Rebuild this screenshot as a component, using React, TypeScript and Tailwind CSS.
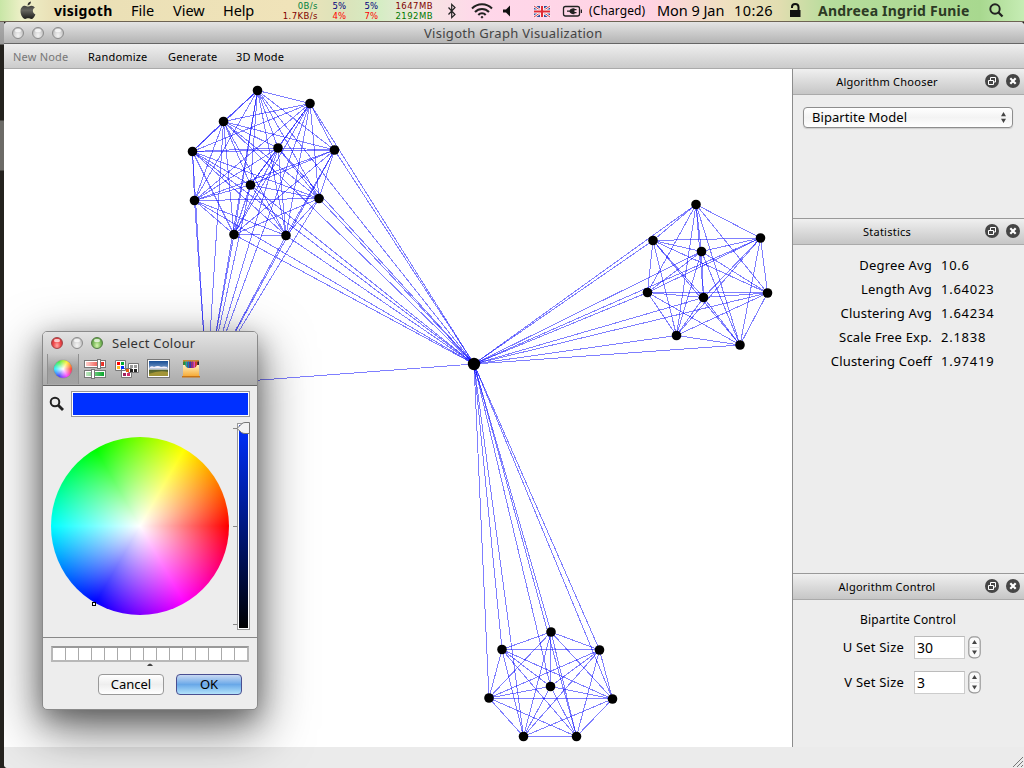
import React from "react";

type Pt = [number, number];

const clusterA: Pt[] = [[257.5, 90.5], [310, 103.5], [223.5, 121.5], [192.5, 151.5], [278, 148], [334.5, 150], [250.5, 185], [194.5, 200.5], [319, 198.5], [234, 234.5], [286, 235.5]];
const clusterB: Pt[] = [[696, 204.5], [653, 240.5], [760.5, 238], [701.5, 251.5], [647.5, 292.5], [703.5, 297.5], [767.5, 293], [676.5, 335.5], [740, 345]];
const clusterC: Pt[] = [[551, 632], [502, 649.5], [599.5, 650], [489, 698], [550.5, 686.5], [612.5, 699], [523.5, 736.5], [576.5, 736.5]];
const hub: Pt = [474, 364];
const hiddenHub: Pt = [207, 384];

const edges: [Pt, Pt][] = [];
for (const group of [clusterA, clusterB, clusterC]) {
  group.forEach((a, i) => {
    group.slice(i + 1).forEach((b) => edges.push([a, b]));
    edges.push([a, hub]);
    if (group === clusterA) edges.push([a, hiddenHub]);
  });
}
edges.push([hub, hiddenHub]);

function Graph() {
  return (
    <svg width="788" height="678" viewBox="4 69 788 678" className="block">
      <g stroke="#0000ff" strokeOpacity="0.5" strokeWidth="1" shapeRendering="crispEdges">
        {edges.map(([a, b], i) => (
          <line key={i} x1={a[0]} y1={a[1]} x2={b[0]} y2={b[1]} />
        ))}
      </g>
      {[...clusterA, ...clusterB, ...clusterC].map((p, i) => (
        <circle key={i} cx={p[0]} cy={p[1]} r="4.8" />
      ))}
      <circle cx={hub[0]} cy={hub[1]} r="6.2" />
    </svg>
  );
}

function Light({ kind }: { kind: "red" | "gray" | "green" }) {
  const c = {
    red: "border-[#a04548] bg-radial-[at_50%_75%] from-[#ffaaa5] via-[#f0494b] to-[#b82a30]",
    gray: "border-[#8c8c8c] bg-radial-[at_50%_75%] from-[#f4f4f4] via-[#d6d6d6] to-[#a8a8a8]",
    green: "border-[#527b43] bg-radial-[at_50%_75%] from-[#d5f6b0] via-[#82be60] to-[#4a8a38]",
  }[kind];
  return (
    <span className={`flex h-3 w-3 justify-center rounded-full border ${c}`}>
      <span className="mt-px h-[3px] w-1.5 rounded-full bg-white/70" />
    </span>
  );
}

function Apple() {
  return (
    <svg width="16" height="19" viewBox="0 0 16 19">
      <defs>
        <linearGradient id="apple" x1="0" y1="0" x2="0" y2="1">
          <stop offset="0" stopColor="#222" />
          <stop offset=".5" stopColor="#666660" />
          <stop offset="1" stopColor="#1c1c1a" />
        </linearGradient>
      </defs>
      <path fill="url(#apple)" d="M10.9.6C11.1 2.7 9.4 4.6 7.6 4.5 7.4 2.6 9 .9 10.9.6zM8 5.6C8.7 5.6 9.800 4.700 11.400 4.700 12.900 4.700 14.200 5.500 14.900 6.600 11.900 8.300 12.400 12.200 15.400 13.400 14.700 15.500 13 18 11.300 18 10.100 18 9.600 17.300 8.200 17.300 6.800 17.300 6.300 18 5.100 18 3.100 18 .5 14 .5 10.200.5 6.600 2.700 4.700 4.800 4.700 6.300 4.700 7.300 5.600 8 5.600z" />
    </svg>
  );
}

function Meter({ box, top, bottom, topColor, bottomColor }: { box: string; top: string; bottom: string; topColor: string; bottomColor: string }) {
  return (
    <div className={`flex shrink-0 flex-col items-end text-[8.5px] leading-[10px] [font-family:'DejaVu_Sans',sans-serif] ${box}`}>
      <span className={topColor}>{top}</span>
      <span className={bottomColor}>{bottom}</span>
    </div>
  );
}

function MenuBar() {
  return (
    <header className="flex h-[22px] shrink-0 items-center border-b border-[#6d6353] bg-[linear-gradient(90deg,#c8e6a6_0,#eef0c8_22px,#e9dfb5_55px,#f0e3b9_290px,#dbe3ba_345px,#d5edc4_380px,#f7e4e4_430px,#ffd7ea_480px,#ffd3e3_650px,#efe0c0_725px,#e1ddb0_780px,#b6dd9c_830px,#a8d88f_980px,#c6ecb4_1024px)] text-[14.5px] whitespace-nowrap text-black">
      <div className="w-[54px] shrink-0 pl-5"><Apple /></div>
      <b className="w-[77px] shrink-0 text-[14px] tracking-[0.3px]">visigoth</b>
      <span className="w-[42px] shrink-0">File</span>
      <span className="w-[50px] shrink-0">View</span>
      <span className="w-[50px] shrink-0 tracking-[-0.1px]">Help</span>
      <Meter box="w-[45px] tracking-[0.45px]" top="0B/s" bottom="1.7KB/s" topColor="text-[#00803c]" bottomColor="text-[#800000]" />
      <Meter box="w-[28px]" top="5%" bottom="4%" topColor="text-[#00007c]" bottomColor="text-[#f00]" />
      <Meter box="w-[32px]" top="5%" bottom="7%" topColor="text-[#00007c]" bottomColor="text-[#f00]" />
      <Meter box="w-[55px] tracking-[0.45px]" top="1647MB" bottom="2192MB" topColor="text-[#800000]" bottomColor="text-[#007a00]" />
      <svg className="ml-[14px] shrink-0" width="135" height="20" viewBox="447 1 135 20" fill="none" stroke="#222">
        <path d="M448.500 7.500l6.500 7-3.300 3.200V4.300l3.300 3.200-6.500 7" strokeWidth="1.200" />
        <g strokeWidth="2">
          <path d="M472 8.500a14 14 0 0 1 20 0M475 12a9.500 9.500 0 0 1 14 0M478.300 15a5 5 0 0 1 7.400 0" />
          <circle cx="482" cy="17.200" r=".8" fill="#222" strokeWidth="1" />
        </g>
        <path d="M503 9.500h3l4-4v11l-4-4h-3z" fill="#111" stroke="none" />
        <g stroke="none">
          <path fill="#31509a" d="M534 6h16v11h-16z" />
          <path d="M534 6l16 11M550 6l-16 11" stroke="#fff" strokeWidth="2.600" />
          <path d="M534 6l16 11M550 6l-16 11" stroke="#d8303c" strokeWidth="1" />
          <path d="M542 6v11M534 11.500h16" stroke="#fff" strokeWidth="4" />
          <path d="M542 6v11M534 11.500h16" stroke="#e02b35" strokeWidth="2.200" />
        </g>
        <rect x="563.500" y="6.500" width="16" height="9.500" rx="2" strokeWidth="1.300" />
        <path d="M581.400 9.500v3.500" strokeWidth="1.300" />
        <path d="M567 11.200h3M576.500 9.700h-3M576.500 12.700h-3" strokeWidth="1.300" />
        <path d="M574.500 8.300v5.900h-1.500q-3.500-.8-3.500-3t3.500-2.900z" fill="#222" stroke="none" />
      </svg>
      <span className="ml-[7px] w-[68px] shrink-0 text-[12px] tracking-[0.1px]">(Charged)</span>
      <span className="w-[77px] shrink-0 tracking-[-0.05px]">Mon 9 Jan</span>
      <span className="w-[56px] shrink-0 tracking-[0.4px]">10:26</span>
      <svg className="shrink-0" width="11" height="15" viewBox="0 0 11 15">
        <path d="M2 5V4Q2 1 5.200 1t3.300 3V8" fill="none" stroke="#111" strokeWidth="2" />
        <path d="M0 7h10.500v7H0z" fill="#111" />
      </svg>
      <b className="ml-[17px] w-[170px] shrink-0 text-[14px] font-bold tracking-[0.22px] text-[#2c3a24]">Andreea Ingrid Funie</b>
      <svg className="shrink-0" width="17" height="17" viewBox="0 0 17 17" fill="none" stroke="#222">
        <circle cx="7" cy="7" r="4.700" strokeWidth="1.900" />
        <path d="M10.500 10.500l4 4" strokeWidth="2.300" />
      </svg>
    </header>
  );
}

function DockTitle({ title }: { title: string }) {
  return (
    <div className="flex h-[26px] items-center border-b border-[#aaa] bg-linear-to-b from-[#f0f0f0] to-[#c6c6c6]">
      <div className="w-[188px] pt-[2px] text-center text-[11px] tracking-[0.24px]">{title}</div>
      <svg width="40" height="18" viewBox="0 0 40 18" className="-mt-0.5 ml-[2px]">
        <g fill="#454545"><circle cx="9" cy="9" r="7" /><circle cx="30" cy="9" r="7" /></g>
        <g fill="none" stroke="#fff" strokeWidth="1">
          <path d="M5.500 8.500h5v4h-5zM7.500 8V5.500h5v4.500H11" />
          <path d="M27.300 6.300l5.400 5.400M32.700 6.300l-5.400 5.400" strokeWidth="2.200" />
        </g>
      </svg>
    </div>
  );
}

function Stepper({ label, value }: { label: string; value: string }) {
  return (
    <div className="flex h-[35px] items-start">
      <span className="w-[111px] pt-[1px] text-right text-[13px] leading-[20px] tracking-[0.2px]">{label}</span>
      <span className="ml-[10px] h-[23px] w-[51px] border border-[#ccc] border-t-[#bbb] bg-white pl-[2px] text-[14px] leading-[22px]">{value}</span>
      <svg className="ml-[3px]" width="13" height="23" viewBox="0 0 13 23">
        <rect x=".8" y=".8" width="11.400" height="21" rx="4.500" fill="#fafafa" stroke="#999" strokeWidth="1.200" />
        <path d="M1.500 11.500h10" stroke="#e2e2e2" />
        <path d="M4 8l2.500-4L9 8zM4 14.500l2.500 4 2.500-4z" fill="#444" />
      </svg>
    </div>
  );
}

const stats: [string, string][] = [
  ["Degree Avg", "10.6"],
  ["Length Avg", "1.64023"],
  ["Clustering Avg", "1.64234"],
  ["Scale Free Exp.", "2.1838"],
  ["Clustering Coeff", "1.97419"],
];

function Sidebar() {
  return (
    <aside className="flex h-[678px] w-[232px] flex-col border-l border-[#8c8c8c] bg-[#ededed]">
      <section className="h-[149px]">
        <DockTitle title="Algorithm Chooser" />
        <div className="mt-[12px] ml-[10px] flex h-[21px] w-[210px] items-center justify-between rounded-[4px] border border-[#8d8d8d] bg-linear-to-b from-white via-[#f3f3f3] to-white pr-[5px] pl-[8px] text-[13px] shadow-[0_1px_1px_#ccc]">
          <span className="tracking-[0.06px]">Bipartite Model</span>
          <svg width="7" height="11" viewBox="0 0 7 11"><path d="M1 4.300L3.500 0 6 4.300zM1 6.700L3.500 11 6 6.700z" fill="#444" /></svg>
        </div>
      </section>
      <section className="h-[355px] border-t border-[#999]">
        <DockTitle title="Statistics" />
        <div className="pt-[8px] text-[13px] leading-[24px]">
          {stats.map(([k, v]) => (
            <div key={k} className="flex h-6">
              <span className="w-[139px] text-right tracking-[0.18px]">{k}</span>
              <span className="ml-[9px] tracking-[0.75px]">{v}</span>
            </div>
          ))}
        </div>
      </section>
      <section className="flex-1 border-t border-[#999]">
        <DockTitle title="Algorithm Control" />
        <div className="mt-[11px] h-[25px] w-[230px] text-center text-[12px] leading-[17px] tracking-[0.15px]">Bipartite Control</div>
        <Stepper label="U Set Size" value="30" />
        <Stepper label="V Set Size" value="3" />
      </section>
    </aside>
  );
}

function PickerTools() {
  return (
    <div className="flex h-[30px] items-center">
      <div className="ml-[4px] flex h-[30px] w-[32px] items-center justify-center border-x border-[#909090] bg-linear-to-b from-black/0 via-black/15 to-black/5">
        <span className="h-[18px] w-[18px] rounded-full bg-[radial-gradient(circle,#fff_0%,transparent_65%),conic-gradient(from_90deg,#f43,#f4f,#44f,#3ef,#4e4,#fe3,#f43)] shadow-[0_0_1px_#555]" />
      </div>
      <svg className="ml-[4px]" width="126" height="22" viewBox="0 0 126 22">
        <defs>
          <linearGradient id="r"><stop stopColor="#ffd0cc" /><stop offset="1" stopColor="#e8251c" /></linearGradient>
          <linearGradient id="g"><stop stopColor="#c4e8c4" /><stop offset="1" stopColor="#08a62b" /></linearGradient>
          <linearGradient id="sky" x1="0" y1="0" x2="0" y2="1">
            <stop stopColor="#174d96" /><stop offset=".35" stopColor="#5b83b8" /><stop offset=".55" stopColor="#e4e4ee" /><stop offset=".6" stopColor="#4f6130" /><stop offset="1" stopColor="#85832f" />
          </linearGradient>
          <linearGradient id="box" x1="0" y1="0" x2="0" y2="1"><stop stopColor="#fff0be" /><stop offset="1" stopColor="#f6a52c" /></linearGradient>
        </defs>
        <g strokeWidth="1" stroke="#777" fill="#fff">
          <rect x="1.500" y="2.500" width="21" height="7" /><rect x="1.500" y="12.500" width="21" height="7" />
          <path d="M3 4h18v4H3z" fill="url(#r)" stroke="none" /><path d="M3 14h18v4H3z" fill="url(#g)" stroke="none" />
          <rect x="14.500" y="1.500" width="3" height="9" /><rect x="8.500" y="11.500" width="3" height="9" />
          <path d="M45.500 5.500h10v9h-10zM38.500 10.500h10v9h-10zM32.500 2.500h10v10h-10z" />
        </g>
        <g>
          <path fill="#f00" d="M34 4h3v3h-3z" /><path fill="#0a3" d="M38 4h3v3h-3z" /><path fill="#fb2" d="M34 8h3v3h-3z" /><path fill="#03f" d="M38 8h3v3h-3z" />
          <path fill="#e85c10" d="M43 11h3v3h-3z" /><path fill="#a0215e" d="M40 15h3v3h-3z" /><path fill="#d32a6a" d="M44 15h3v3h-3z" />
          <path fill="#999" d="M47 7h3v3h-3zM51 7h3v3h-3z" /><path fill="#222" d="M47 11h3v3h-3zM51 11h3v3h-3z" />
        </g>
        <rect x="64.500" y="1.500" width="22" height="18" fill="#fff" stroke="#777" />
        <path d="M66 3h19v15H66z" fill="url(#sky)" />
        <path d="M67 9q2-1.500 4 0 4-2 7 0 3-1 6 0v1H67z" fill="#f5f0f8" />
        <path d="M66 16q10-4 19-2v4H66z" fill="#a39537" />
        <path d="M100 2h16v17h-16z" fill="#c88a35" />
        <path d="M100 4h16v7h-16z" fill="#8b4a28" />
        {["#18a33b", "#14aaa5", "#176ed3", "#3833b4", "#8f269f", "#e24abf", "#e23333", "#26252b"].map((c, i) => (
          <path key={c} d={`M${100.5 + i * 2} 3.5h1.5v7h-1.500z`} fill={c} />
        ))}
        <path d="M100 7h2q1 3 3 3h6q2 0 3-3h2v12h-16z" fill="url(#box)" />
        <path d="M99 18h18v1.500H99z" fill="#c87415" />
      </svg>
    </div>
  );
}

function ColourDialog() {
  return (
    <div className="absolute top-[331px] left-[42px] flex h-[379px] w-[216px] flex-col rounded-[5px] border border-[#8a8a8a] bg-[#ededed] shadow-[0_18px_52px_2px_rgba(0,0,0,0.55),0_8px_24px_0px_rgba(0,0,0,0.3)]">
      <div className="h-[54px] rounded-t-[4px] border-b border-[#666] bg-linear-to-b from-[#e3e3e3] to-[#aaa]">
        <div className="flex h-[22px] items-center pl-[8px]">
          <div className="flex gap-2"><Light kind="red" /><Light kind="gray" /><Light kind="green" /></div>
          <span className="ml-[9px] pt-px text-[13px] tracking-[0.25px] text-[#333]">Select Colour</span>
        </div>
        <PickerTools />
      </div>
      <div className="flex h-[36px] items-start pt-[5px]">
        <svg className="mt-[5px] ml-[6px]" width="16" height="16" viewBox="0 0 16 16" fill="none" stroke="#222">
          <circle cx="6" cy="6" r="4.300" strokeWidth="2" /><path d="M9 9l5 5" strokeWidth="2.800" />
        </svg>
        <div className="ml-[6px] h-[26px] w-[179px] border border-[#999] bg-[#0030ff] shadow-[inset_0_0_0_1px_#fff]" />
      </div>
      <div className="flex h-[215px]">
        <div className="relative mt-[15px] ml-[8px] h-[178px] w-[178px] rounded-full bg-[radial-gradient(circle_closest-side,#fff_0%,rgba(255,255,255,0.48)_50%,transparent_98%),conic-gradient(from_90deg,#f00,#f0f,#00f,#0ff,#0f0,#ff0,#f00)]">
          <span className="absolute top-[165px] left-[41px] h-1 w-1 border border-black bg-white" />
        </div>
        <svg className="ml-[4px]" width="18" height="213" viewBox="0 0 18 213">
          <defs><linearGradient id="val" x1="0" y1="0" x2="0" y2="1"><stop stopColor="#0030ff" /><stop offset="1" stopColor="#000" /></linearGradient></defs>
          <path d="M0 6.500h5M0 104.500h5M0 202.500h5" stroke="#888" />
          <rect x="4.500" y="1.500" width="12" height="206" fill="#fff" stroke="#999" />
          <rect x="6" y="3" width="9" height="203" fill="url(#val)" />
          <path d="M4 6.500l4.500-4.500Q10 .5 12 .5h4.500v11H12q-2 0-3.500-1z" fill="#f2f2f2" stroke="#777" />
        </svg>
      </div>
      <div className="border-t border-[#888] pt-[8px]">
        <div className="ml-[8px] flex h-4 w-[198px] gap-px border-2 border-[#b8b8b8] border-t-[#999] bg-[#aaa]">
          {Array.from({ length: 15 }, (_, i) => <span key={i} className="flex-1 bg-white" />)}
        </div>
        <svg className="ml-[104px] block" width="6" height="5"><path d="M0 4q3-5 6 0z" fill="#444" /></svg>
      </div>
      <div className="mt-[7px] ml-[55px] flex gap-[12px] text-[13px] leading-[19px]">
        <button className="h-[21px] w-[66px] rounded-[4px] border border-[#999] bg-linear-to-b from-white via-[#eee] to-white">Cancel</button>
        <button className="h-[21px] w-[66px] rounded-[4px] border border-[#4a4f91] bg-linear-to-b from-[#c9d9f2] via-[#69a8e8] to-[#b3e3fa]">OK</button>
      </div>
    </div>
  );
}

export default function App() {
  return (
    <div className="relative flex h-[768px] w-[1024px] flex-col overflow-hidden bg-[#24221e] [font-family:'Noto_Sans',sans-serif] text-black">
      <MenuBar />
      <div className="flex h-[746px]">
        <div className="relative z-10 w-1 shrink-0 bg-[linear-gradient(#aaa_0,#999_22px,#24221e_23px,#24221e_98px,#6c6b67_99px,#6c6b67_148px,#24221e_149px)]" />
        <div className="flex h-[746px] w-[1020px] flex-col overflow-hidden rounded-t-[4px] rounded-bl-[4px] bg-[#ebebeb]">
          <div className="flex h-[22px] items-center border-b border-[#666] bg-linear-to-b from-[#e4e4e4] to-[#b4b4b4] pl-[8px]">
            <div className="flex w-[412px] gap-2"><Light kind="gray" /><Light kind="gray" /><Light kind="gray" /></div>
            <span className="pt-[2px] text-[13px] tracking-[0.28px] text-[#444]">Visigoth Graph Visualization</span>
          </div>
          <nav className="flex h-[25px] items-center border-b border-[#aaa] bg-linear-to-b from-[#efefef] to-[#cbcbcb] pt-[2px] pl-[9px] text-[11px] tracking-[0.2px]">
            <span className="w-[75px] text-[#777]">New Node</span>
            <span className="w-[80px]">Randomize</span>
            <span className="w-[68px]">Generate</span>
            <span>3D Mode</span>
          </nav>
          <main className="flex h-[678px]">
            <div className="w-[788px] bg-white"><Graph /></div>
            <Sidebar />
          </main>
          <footer className="flex h-[21px] items-end justify-end bg-[#ebebeb]">
            <svg width="12" height="12" stroke="#777"><path d="M1 11L11 1M5 11l6-6M9 11l2-2" /></svg>
          </footer>
        </div>
      </div>
      <ColourDialog />
    </div>
  );
}
